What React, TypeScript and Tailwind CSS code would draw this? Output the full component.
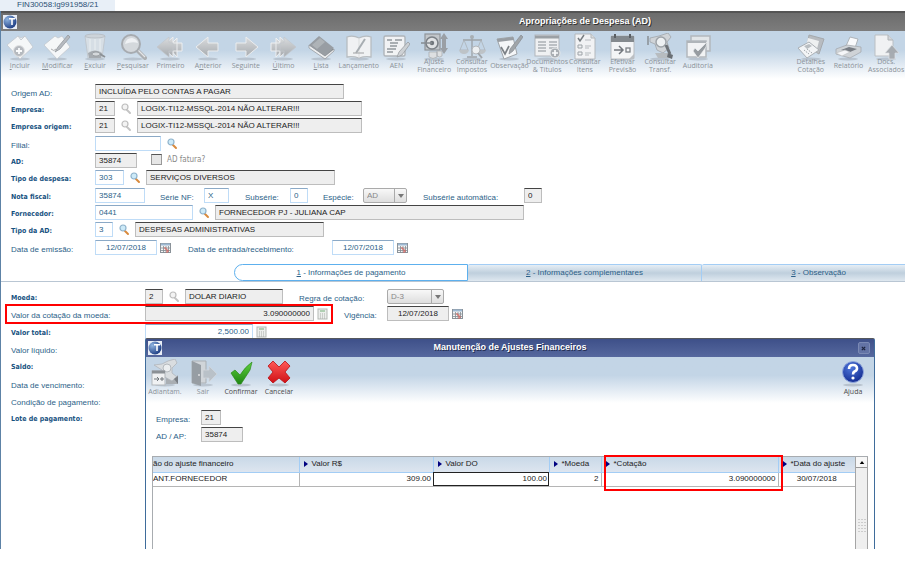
import type { ReactNode } from 'react';
import clsx from 'clsx';

/* ---------- Drawings ---------- */

const icons: Record<string, ReactNode> = {
  incluir: (
    <>
      <path d="M1 12 12 3l3 2 4-2 8 11-13 12z" fill="#fbfbfb" stroke="#c3c7cc" strokeWidth=".8" />
      <path d="m12 3 3 4 4-4" fill="none" stroke="#c6cacf" />
      <circle cx="13" cy="18" r="5.5" fill="#b4b7bb" stroke="#e4e4e4" />
      <path d="M13 15v6M10 18h6" stroke="#fff" strokeWidth="1.8" />
    </>
  ),
  modificar: (
    <>
      <path d="M1 12 12 3l3 2 4-2 8 11-13 12z" fill="#fbfbfb" stroke="#c3c7cc" strokeWidth=".8" />
      <path d="m25 2-10 12-3 5 5-3L27 4z" fill="#b5b8bc" stroke="#8f9397" strokeWidth=".8" />
      <path d="M8 16q3 3 5 0" fill="none" stroke="#aaa" />
    </>
  ),
  excluir: (
    <>
      <path d="M4 3h20l-3 22H7z" fill="#dfe2e5" fillOpacity=".8" stroke="#bcc1c6" strokeWidth=".8" />
      <ellipse cx="14" cy="3" rx="10" ry="2" fill="#ced3d8" stroke="#b4b9be" strokeWidth=".8" />
      <path d="M9 6v12M14 6v12M19 6v12" stroke="#eff1f3" strokeWidth="1" />
      <path d="M7 20q7-5 14 0l-1 5H8z" fill="#a2a6aa" />
      <path d="m19 21 5 3" stroke="#85898d" strokeWidth="2" />
      <ellipse cx="15" cy="21" rx="4" ry="2" fill="#d6d8da" stroke="#85898d" strokeWidth=".7" />
    </>
  ),
  pesquisar: (
    <>
      <path d="m18 17 8 8" stroke="#a9abad" strokeWidth="4" strokeLinecap="round" />
      <path d="m19 17 7 7" stroke="#e8e8e8" strokeWidth="1.3" />
      <circle cx="12" cy="11" r="9" fill="#d6d9dc" stroke="#a4a7ab" strokeWidth="2" />
      <path d="M6 11q1-6 7-6 5 1 6 5-6-2-13 1z" fill="#f4f5f6" />
    </>
  ),
  primeiro: (
    <>
      <path d="M12 14 21 5v5h5v8h-5v6z" fill="url(#silver)" stroke="#f3f3f3" />
      <path d="M6 14 17 4v6h4v8h-4v6z" fill="url(#silver)" stroke="#f0f0f0" />
      <path d="M1 14 13 4v6h4v8h-4v6z" fill="url(#silver)" stroke="#c3c6ca" strokeWidth=".7" />
    </>
  ),
  anterior: <path d="M2 14 14 4v6h10v8H14v6z" fill="url(#silver)" stroke="#f0f0f0" />,
  seguinte: <path d="M26 14 14 4v6H4v8h10v6z" fill="url(#silver)" stroke="#f0f0f0" />,
  ultimo: (
    <>
      <path d="M16 14 7 5v5H2v8h5v6z" fill="url(#silver)" stroke="#f3f3f3" />
      <path d="M22 14 11 4v6H7v8h4v6z" fill="url(#silver)" stroke="#f0f0f0" />
      <path d="M27 14 15 4v6h-4v8h4v6z" fill="url(#silver)" stroke="#c3c6ca" strokeWidth=".7" />
    </>
  ),
  lista: (
    <>
      <path d="m2 13 10-9 15 13-9 9z" fill="#6f7377" />
      <path d="m2 15 16 11 9-8v-2l-9 7L2 12z" fill="#f1f1f1" stroke="#898d91" strokeWidth=".7" />
      <path d="m2 12 10-9 15 12-9 8z" fill="#94989c" />
      <path d="m5 12 8-7 5 4-8 7z" fill="#acb0b3" />
    </>
  ),
  lancamento: (
    <>
      <path d="M2 4q6-2 12 1 6-3 12-1v20q-6-1-12 1-6-2-12-1z" fill="#f5f5f5" stroke="#b6babd" strokeWidth="1.3" />
      <path d="M14 5v20" stroke="#ddd" />
      <path d="m20 6-9 14" stroke="#a5a9ad" strokeWidth="2" />
      <path d="M8 20h11" stroke="#aaa" strokeWidth="1.2" />
    </>
  ),
  aen: (
    <>
      <rect x="2" y="3" width="21" height="20" rx="1.5" fill="#f6f6f6" stroke="#adb1b5" strokeWidth="1.4" />
      <path d="M5 7h5M8 10h8M8 13h7M5 16h9M5 19h6M13 7h7" stroke="#8f9397" strokeWidth="1.3" />
      <path d="m26 9-9 10-2 5 5-2 8-11z" fill="#cfd1d3" stroke="#94979a" strokeWidth=".8" />
    </>
  ),
  ajuste: (
    <>
      <rect x="5" y="1" width="15" height="16" fill="#c2c5c8" stroke="#8a8e92" strokeWidth="1.2" />
      <circle cx="12" cy="10" r="6" fill="#e4e4e4" stroke="#75797d" strokeWidth="1.6" />
      <circle cx="12" cy="10" r="2.2" fill="#686c70" />
      <path d="M1 10h11" stroke="#808488" strokeWidth="1.5" />
      <path d="m24 0 4 6h-2v9h2l-4 6-4-6h2V6h-2z" fill="#969a9e" />
      <path d="M9 19v5q4 3 8 0v-5zM17 18v5q3 2 5 0v-5z" fill="#dfe0e1" stroke="#a2a5a8" strokeWidth=".7" />
    </>
  ),
  impostos: (
    <>
      <path d="M14 3v20M5 7h19M9 24h10" stroke="#9b9fa3" strokeWidth="1.4" />
      <circle cx="14" cy="4" r="2" fill="#a6aaae" />
      <path d="M6 7 2 17h8zM23 7l-4 10h8z" fill="none" stroke="#aaaeb2" strokeWidth=".8" />
      <path d="M1 17h10q-1 4-5 4t-5-4zM18 17h10q-1 4-5 4t-5-4z" fill="#bdc1c4" />
      <circle cx="18" cy="17" r="4" fill="#f1f2f3" stroke="#b1b4b7" />
      <path d="m20 20 4 5" stroke="#9b9fa3" strokeWidth="2" />
    </>
  ),
  observacao: (
    <>
      <path d="m2 6 16-2 4 17-13 5z" fill="#fafafa" stroke="#9a9ea2" />
      <path d="m2 6 16-2 1 3L3 9z" fill="#94989c" />
      <path d="m6 14 4 7 4-8" fill="none" stroke="#74787c" strokeWidth="1.7" />
      <path d="M26 2 15 16l-1 5 4-3L28 4z" fill="#9da0a3" stroke="#818589" strokeWidth=".7" />
    </>
  ),
  documentos: (
    <>
      <rect x="2" y="2" width="24" height="21" fill="#f4f4f4" stroke="#b0b3b7" />
      <path d="M2 4h24" stroke="#979b9f" strokeWidth="3" />
      <path d="M5 9h8M5 12h8M5 15h8M5 18h8M16 9h8M16 12h8M16 15h8" stroke="#a9acb0" strokeWidth="1.3" />
      <circle cx="22" cy="20" r="5" fill="#a5a9ad" stroke="#ededed" />
      <path d="M22 17v6M19 20h6" stroke="#fff" strokeWidth="1.7" />
    </>
  ),
  itens: (
    <>
      <path d="M4 1h16l4 4v21H4z" fill="#f6f6f6" stroke="#b2b5b8" />
      <path d="M20 1v4h4" fill="#ddd" stroke="#b2b5b8" />
      <path d="M7 5l2 3 4-6" fill="none" stroke="#707478" strokeWidth="1.5" />
      <path d="M7 12h4v3H7zM7 19h4v3H7z" fill="none" stroke="#999da1" />
      <path d="M14 7h6M14 13h6M14 15h4M14 20h6M14 22h4" stroke="#b5b8bb" />
    </>
  ),
  efetivar: (
    <>
      <rect x="3" y="3" width="23" height="23" rx="1" fill="#f8f8f8" stroke="#b7babd" />
      <path d="M3 3h23v6H3z" fill="#7d8185" />
      <path d="M7 1v4M22 1v4" stroke="#4f5356" strokeWidth="2" />
      <path d="M6 17h9M11 13l4 4-4 4" fill="none" stroke="#6b6f73" strokeWidth="1.5" />
      <rect x="18" y="15" width="4" height="4" fill="none" stroke="#74787c" strokeWidth="1.3" />
      <path d="m21 26 5-5v5z" fill="#b9bcbf" />
    </>
  ),
  transf: (
    <>
      <path d="M2 3v9" stroke="#83878b" strokeWidth="1.5" />
      <path d="m4 5 9-2 9-3 3 4-4 5 2 6-6 5-6-3-2-6-5-2z" fill="#d2d4d7" stroke="#9da1a5" strokeWidth=".8" />
      <circle cx="15" cy="9" r="5" fill="#f2f3f4" stroke="#9a9ea2" strokeWidth="1.5" />
      <path d="m20 12 4 9" stroke="#63676b" strokeWidth="3" />
      <path d="M9 20h13l4 5H12z" fill="#b5b9bc" />
      <path d="m22 20 5 2-1 4-5-2z" fill="#606468" />
    </>
  ),
  auditoria: (
    <>
      <rect x="7" y="3" width="19" height="15" fill="#e6e8ea" stroke="#b1b5b9" strokeWidth="1.5" />
      <rect x="3" y="8" width="19" height="16" fill="#f6f6f6" stroke="#b1b5b9" strokeWidth="1.5" />
      <path d="M3 9h19" stroke="#adb1b5" strokeWidth="2" />
      <path d="m11 15 3 3 9-9-1 5-8 11-5-7z" fill="#92969a" stroke="#f1f1f1" strokeWidth=".7" />
    </>
  ),
  detalhes: (
    <>
      <path d="m12 2 15 4-5 15-12-7z" fill="#b7babd" stroke="#a2a5a8" />
      <path d="m11 5 11 3-3 12-10-7z" fill="#f3f3f3" />
      <path d="m1 15 11-6 10 8-12 8z" fill="#f8f8f8" stroke="#a8acb0" />
      <path d="m7 13 5-2 3 2-5 3z" fill="#b9bcbf" />
      <path d="m7 17 5 4M10 16l5 4" stroke="#9fa3a7" strokeDasharray="1.5 1" />
    </>
  ),
  relatorio: (
    <>
      <path d="m12 13 4-9 8 2-3 9z" fill="#fff" stroke="#adb1b5" />
      <path d="m2 16 11-4 14 2v5l-11 6-14-4z" fill="#d0d3d6" stroke="#9da1a5" strokeWidth=".7" />
      <path d="m7 17 8-3 8 2-7 3z" fill="#70747a" />
      <path d="m2 20 9-3 5 2-8 4z" fill="#fafafa" stroke="#bbb" strokeWidth=".6" />
    </>
  ),
  docs: (
    <>
      <path d="M3 2h13l5 5v16H3z" fill="#f5f5f5" stroke="#babdc0" />
      <path d="M16 2v5h5" fill="#d5d7d9" stroke="#adb0b3" />
      <path d="m20 12 7 8h-4v6h-6v-6h-4z" fill="#a3a7ab" stroke="#e3e4e5" strokeWidth=".7" />
    </>
  ),
  adiantam: (
    <>
      <path d="m3 6 8-1 6-3 7-2 2 4-5 5v5l5 4-5 4-9-5-1-6z" fill="#dcdee0" stroke="#b0b3b6" strokeWidth=".8" />
      <circle cx="16" cy="9" r="4" fill="#f0f1f2" stroke="#b3b6b9" />
      <rect x="1" y="12" width="13" height="14" fill="#f4f4f4" stroke="#b0b3b7" />
      <path d="M1 13h13" stroke="#85898d" strokeWidth="3" />
      <path d="M3 20h5M6 18l2 2-2 2M10 19h2v2h-2z" fill="none" stroke="#686c70" />
      <path d="M15 25v-6l6 3 6-6v9z" fill="#a5a9ad" />
      <path d="m23 20 4-3v8z" fill="#70747a" />
    </>
  ),
  sair: (
    <>
      <path d="M3 2h14v22H3z" fill="#d2d5d8" stroke="#a7abaf" />
      <path d="m3 2 9 4v21l-9-3z" fill="#92979c" />
      <circle cx="10" cy="16" r="1" fill="#e0e0e0" />
      <path d="M14 11h6V7l8 8-8 8v-4h-6z" fill="#b9bfc5" stroke="#d5d9dd" strokeWidth=".7" />
    </>
  ),
  confirmar: (
    <path d="m4 14 4-3 5 5Q18 8 25 3l-2 8-9 14h-3z" fill="url(#green)" stroke="#2b8a1b" strokeWidth=".7" />
  ),
  cancelar: (
    <path
      d="m8 2 6 6 6-6 5 5-5 6 5 6-5 5-6-5-6 5-5-5 5-6-5-6z"
      fill="url(#red)"
      stroke="#b80f14"
      strokeWidth=".8"
    />
  ),
  ajuda: (
    <>
      <circle cx="14" cy="13" r="10.5" fill="url(#blue)" stroke="#8fa6dc" />
      <path d="M10 10q0-4 4-4t4 3.500q0 2-2.500 3-1.500.8-1.500 3" fill="none" stroke="#fff" strokeWidth="2.600" />
      <circle cx="14" cy="19" r="1.600" fill="#fff" />
    </>
  ),
};

function Gradients() {
  return (
    <svg className="absolute size-0" aria-hidden="true">
      <defs>
        <linearGradient id="silver" x1="0" y1="0" x2="0" y2="1">
          <stop offset="0" stopColor="#dedede" />
          <stop offset="1" stopColor="#a3a6a9" />
        </linearGradient>
        <linearGradient id="green" x1="0" y1="0" x2="0" y2="1">
          <stop offset="0" stopColor="#5fd23f" />
          <stop offset="1" stopColor="#1f8613" />
        </linearGradient>
        <linearGradient id="red" x1="0" y1="0" x2="0" y2="1">
          <stop offset="0" stopColor="#ff5a58" />
          <stop offset="1" stopColor="#cf1016" />
        </linearGradient>
        <radialGradient id="blue" cx=".4" cy=".3" r=".8">
          <stop offset="0" stopColor="#4f78dd" />
          <stop offset="1" stopColor="#0d2489" />
        </radialGradient>
        <radialGradient id="globe" cx=".3" cy=".3" r=".8">
          <stop offset="0" stopColor="#8fb4e0" />
          <stop offset="1" stopColor="#17377f" />
        </radialGradient>
      </defs>
    </svg>
  );
}

function Logo() {
  return (
    <svg viewBox="0 0 14 14" className="size-[14px] shrink-0" aria-hidden="true">
      <rect width="14" height="14" fill="#e9eef6" />
      <circle cx="7" cy="7" r="6.500" fill="url(#globe)" />
      <path d="M6 3h6v1.500H9.800V10H8.200V4.500H6z" fill="#fff" />
    </svg>
  );
}

function Lens({ off }: { off?: boolean }) {
  return (
    <button type="button" aria-label="Pesquisar" className="size-3 shrink-0">
      <svg viewBox="0 0 12 12" className="size-3">
        <path d="m7 7 3 3" stroke={off ? '#c4c4c4' : '#d98a3c'} strokeWidth="2" strokeLinecap="round" />
        <circle cx="5" cy="4" r="3" fill={off ? '#f3f3f3' : '#cdeaf8'} stroke={off ? '#bdbdbd' : '#8fb3cc'} strokeWidth="1.200" />
      </svg>
    </button>
  );
}

function Calendar() {
  return (
    <button type="button" aria-label="Calendário" className="h-3 w-[11px] shrink-0">
      <svg viewBox="0 0 11 12" className="h-3 w-[11px]">
        <rect x=".5" y="1.500" width="10" height="9" fill="#f6f6f6" stroke="#8a9299" />
        <path d="M1 2.500h9" stroke="#9db9d3" strokeWidth="2" />
        <path d="M1 6h9M1 8.500h9M3.500 4v7M6 4v7M8.500 4v7" stroke="#838b92" strokeWidth=".8" />
        <path d="M4 6h2v2h2v2H6" fill="none" stroke="#d9655e" />
      </svg>
    </button>
  );
}

function Calculator() {
  return (
    <button type="button" aria-label="Calculadora" className="h-3 w-[11px] shrink-0">
      <svg viewBox="0 0 11 12" className="h-3 w-[11px]">
        <rect x="1" y="1" width="9" height="10" fill="#eceeec" stroke="#b5b9b5" />
        <path d="M3 3h5" stroke="#9cc4a0" strokeWidth="1.500" />
        <path d="M3 6h5M3 8h5M3 10h5" stroke="#a9ada9" strokeDasharray="1 1" />
      </svg>
    </button>
  );
}

/* ---------- Toolbar ---------- */

interface Tool {
  icon: string;
  // one entry per line, with the access key between underscores
  label: string[];
  active?: boolean;
  className?: string;
}

const mainTools: Tool[] = [
  { icon: 'incluir', label: ['_I_ncluir'] },
  { icon: 'modificar', label: ['_M_odificar'] },
  { icon: 'excluir', label: ['_E_xcluir'] },
  { icon: 'pesquisar', label: ['_P_esquisar'] },
  { icon: 'primeiro', label: ['Primeiro'] },
  { icon: 'anterior', label: ['A_n_terior'] },
  { icon: 'seguinte', label: ['Se_g_uinte'] },
  { icon: 'ultimo', label: ['_Ú_ltimo'] },
  { icon: 'lista', label: ['_L_ista'] },
  { icon: 'lancamento', label: ['Lançamento'] },
  { icon: 'aen', label: ['AEN'] },
  { icon: 'ajuste', label: ['Ajuste', 'Financeiro'] },
  { icon: 'impostos', label: ['Consultar', 'Impostos'] },
  { icon: 'observacao', label: ['Observação'] },
  { icon: 'documentos', label: ['Documentos', '& Títulos'] },
  { icon: 'itens', label: ['Consultar', 'Itens'] },
  { icon: 'efetivar', label: ['Efetivar', 'Previsão'] },
  { icon: 'transf', label: ['Consultar', 'Transf.'] },
  { icon: 'auditoria', label: ['Auditoria'] },
  { icon: 'detalhes', label: ['Detalhes', 'Cotação'], className: 'col-start-22' },
  { icon: 'relatorio', label: ['Relatório'] },
  { icon: 'docs', label: ['Docs.', 'Associados'] },
];

const dialogTools: Tool[] = [
  { icon: 'adiantam', label: ['Adiantam.'] },
  { icon: 'sair', label: ['Sair'] },
  { icon: 'confirmar', label: ['Confirmar'], active: true },
  { icon: 'cancelar', label: ['Cancelar'], active: true },
];

function ToolButton({ icon, label, active, className }: Tool) {
  return (
    <button type="button" className={clsx('flex flex-col items-center', className)}>
      <svg viewBox="0 0 28 28" className={clsx('-mb-1 size-7 shrink-0', !active && 'opacity-90')} aria-hidden="true">
        <ellipse cx="14" cy="26" rx="10" ry="1.500" fill="#7c858e" fillOpacity=".35" />
        {icons[icon]}
      </svg>
      <span
        className={clsx(
          "relative flex h-[18px] flex-col justify-center whitespace-nowrap font-['Open_Sans',sans-serif] text-[7px] leading-[8px]",
          active ? 'text-[#4c4c4c]' : 'text-[#8b9299]',
        )}
      >
        {label.map((line) => (
          <span key={line}>
            {line.split('_').map((part, i) => (i % 2 ? <u key={i}>{part}</u> : part))}
          </span>
        ))}
      </span>
    </button>
  );
}

/* ---------- Form parts ---------- */

interface FieldProps {
  id: string;
  value?: string;
  width: string;
  editable?: boolean;
  align?: string;
  label?: string;
}

function Field({ id, value = '', width, editable, align, label }: FieldProps) {
  return (
    <input
      id={id}
      aria-label={label}
      defaultValue={value}
      readOnly={!editable}
      className={clsx(
        'h-[15px] shrink-0 border px-[3px] text-[8px] leading-[13px] outline-none',
        editable
          ? 'border-[#bfdcf7] border-t-[#8ba9c6] bg-white text-[#2c5f88]'
          : 'border-[#bdbdbd] border-t-[#444] bg-[#eee] text-[#222]',
        width,
        align,
      )}
    />
  );
}

function Label({ htmlFor, width, bold, children }: { htmlFor: string; width?: string; bold?: boolean; children: ReactNode }) {
  return (
    <label
      htmlFor={htmlFor}
      className={clsx(
        'shrink-0 whitespace-nowrap pt-1',
        bold
          ? "font-['DejaVu_Sans_Condensed','DejaVu_Sans',sans-serif] text-[7px] font-bold leading-[11px] text-[#17527f]"
          : 'text-[8px] leading-[11px] text-[#2c5f88]',
        width,
      )}
    >
      {children}
    </label>
  );
}

function Select({ id, value, width }: { id: string; value: string; width: string }) {
  return (
    <span className={clsx('relative flex h-[15px] shrink-0', width)}>
      <select
        id={id}
        className="w-full appearance-none rounded-xs border border-[#aaa] bg-linear-to-b from-[#f8f8f8] to-[#dedede] px-[3px] text-[8px] leading-[13px] text-[#888]"
      >
        <option>{value}</option>
      </select>
      <span className="pointer-events-none absolute inset-y-0 right-0 flex w-[13px] items-center justify-center border-l border-[#aaa]">
        <svg viewBox="0 0 6 4" className="h-1 w-[6px]">
          <path d="M0 0h6L3 4z" fill="#777" />
        </svg>
      </span>
    </span>
  );
}

function Row({ children }: { children: ReactNode }) {
  return <div className="flex h-[15px] items-center">{children}</div>;
}

function Group({ children }: { children: ReactNode }) {
  return <div className="flex flex-col gap-[2px]">{children}</div>;
}

/* ---------- Dialog ---------- */

function Marker() {
  return (
    <svg viewBox="0 0 4 6" className="h-[6px] w-1 shrink-0" aria-hidden="true">
      <path d="M0 0 4 3 0 6z" fill="#000080" />
    </svg>
  );
}

const columns = ['ão do ajuste financeiro', 'Valor R$', 'Valor DO', '*Moeda', '*Cotação', '*Data do ajuste'];

function AdjustmentsDialog() {
  return (
    <section
      role="dialog"
      aria-label="Manutenção de Ajustes Financeiros"
      className="absolute bottom-0 left-[145px] right-[30px] top-[338px] flex flex-col rounded-t-xs border-x border-t border-x-[#3f6c9b] border-t-[#55585e] bg-white"
    >
      <header className="flex h-[18px] shrink-0 items-center justify-between bg-linear-to-b from-[#3e5089] to-[#56689e] px-[2px]">
        <Logo />
        <h2 className="text-[9px] font-bold text-white text-shadow-[1px_1px_0_#222c50]">Manutenção de Ajustes Financeiros</h2>
        <button
          type="button"
          aria-label="Fechar"
          className="mr-[2px] flex size-3 items-center justify-center rounded-xs border border-[#7a89b4] bg-[#6373a5]"
        >
          <svg viewBox="0 0 6 6" className="size-[5px]">
            <path d="m1 1 4 4M5 1 1 5" stroke="#1d2440" strokeWidth="1.500" />
          </svg>
        </button>
      </header>

      <div className="flex h-[46px] shrink-0 bg-linear-to-b from-[#c3d5e6] from-40% to-white pt-[2px]">
        {dialogTools.map((tool) => (
          <ToolButton key={tool.icon} {...tool} className="w-[38px]" />
        ))}
        <ToolButton icon="ajuda" label={['Ajuda']} active className="ml-auto mr-[2px] w-[38px]" />
      </div>

      <div className="flex flex-col gap-[2px] pb-[14px] pl-[10px] pt-[7px]">
        <Row>
          <Label htmlFor="dlg-empresa" width="w-[45px]">Empresa:</Label>
          <Field id="dlg-empresa" value="21" width="w-5" />
        </Row>
        <Row>
          <Label htmlFor="dlg-ad" width="w-[45px]">AD / AP:</Label>
          <Field id="dlg-ad" value="35874" width="w-[42px]" />
        </Row>
      </div>

      <div className="ml-[6px] mr-[6px] flex min-h-0 grow border-l border-t border-[#a8acb0]">
        <div className="min-w-0 grow">
          <table className="w-full table-fixed border-collapse whitespace-nowrap text-[8px] leading-[12px] text-[#222]">
            <colgroup>
              <col className="w-[146px]" />
              <col className="w-[134px]" />
              <col className="w-[116px]" />
              <col className="w-[52px]" />
              <col className="w-[177px]" />
              <col />
            </colgroup>
            <thead>
              <tr className="h-[15px] bg-linear-to-b from-[#c9d9e8] to-[#dde5ef]">
                {columns.map((name, i) => (
                  <th
                    key={name}
                    scope="col"
                    className="overflow-hidden border-b border-r border-[#a3cdf5] p-0 text-left font-normal last:border-r-0"
                  >
                    {i === 0 ? (
                      name
                    ) : (
                      <span className="flex items-center gap-1 pl-1">
                        <Marker />
                        {name}
                      </span>
                    )}
                  </th>
                ))}
              </tr>
            </thead>
            <tbody>
              <tr className="h-[14px] border-b border-[#b5b5b5] text-right">
                <td className="overflow-hidden border-r border-[#b5b5b5] p-0 text-left">ANT.FORNECEDOR</td>
                <td className="p-0 pr-[2px]">309.00</td>
                <td className="p-0 pr-[2px] outline outline-[#222] -outline-offset-1">100.00</td>
                <td className="border-r border-[#b5b5b5] p-0 pr-[2px]">2</td>
                <td className="border-r border-[#b5b5b5] p-0 pr-[2px]">3.090000000</td>
                <td className="p-0 text-center">30/07/2018</td>
              </tr>
            </tbody>
          </table>
        </div>
        {/* Scroll bar */}
        <div className="flex w-[13px] shrink-0 flex-col items-center border-x border-[#a5a5a5] bg-[#efefef]">
          <button
            type="button"
            aria-label="Rolar para cima"
            className="flex h-[11px] w-full items-center justify-center border-b border-[#999] bg-[#f7f7f7]"
          >
            <svg viewBox="0 0 6 4" className="h-[3px] w-[6px]">
              <path d="M0 4h6L3 0z" fill="#000" />
            </svg>
          </button>
          <div className="flex grow flex-col items-center justify-end pb-4">
            <svg viewBox="0 0 8 14" className="h-[14px] w-2" aria-hidden="true">
              <path d="M1 0v14M4 0v14M7 0v14" stroke="#aaa" strokeDasharray="1 2" />
            </svg>
          </div>
        </div>
      </div>
    </section>
  );
}

/* ---------- Page ---------- */

export default function App() {
  return (
    <div className="h-screen overflow-hidden bg-white pb-3 pr-1 font-['Liberation_Sans',Arial,sans-serif] text-[8px]">
      <Gradients />
      <div className="relative flex h-full flex-col overflow-hidden">
        <div className="flex h-[11px] shrink-0 items-start">
          <a href="#" className="h-[11px] w-[115px] bg-[#e8eff7] pl-[17px] leading-[9px] text-[#2c4f75]">
            FIN30058:lg991958/21
          </a>
        </div>

        <main className="flex min-h-0 grow flex-col border-l border-[#5d82a6]">
          <header className="flex h-5 shrink-0 items-center border-t-2 border-[#555] bg-linear-to-b from-[#6d6d6d] to-[#7c7c7c] px-[2px]">
            <Logo />
            <h1 className="grow pl-[250px] text-center text-[9px] font-bold text-white text-shadow-[1px_1px_0_#333]">
              Apropriações de Despesa (AD)
            </h1>
          </header>

          <nav
            aria-label="Ações"
            className="grid h-[48px] shrink-0 grid-cols-24 justify-items-center bg-linear-to-b from-[#c3d5e6] from-40% to-white pt-[2px]"
          >
            {mainTools.map((tool) => (
              <ToolButton key={tool.icon} {...tool} />
            ))}
          </nav>

          <form className="flex flex-col gap-[3px] pl-[10px] pt-[5px]">
            <Group>
              <Row>
                <Label htmlFor="origem" width="w-[84px]">Origem AD:</Label>
                <Field id="origem" value="INCLUÍDA PELO CONTAS A PAGAR" width="w-[249px]" />
              </Row>
              <Row>
                <Label htmlFor="empresa" width="w-[84px]" bold>Empresa:</Label>
                <Field id="empresa" value="21" width="w-5" />
                <span className="flex px-[5px]"><Lens off /></span>
                <Field id="empresa-nome" label="Nome da empresa" value="LOGIX-TI12-MSSQL-2014 NÃO ALTERAR!!!" width="w-[225px]" />
              </Row>
              <Row>
                <Label htmlFor="empresa-origem" width="w-[84px]" bold>Empresa origem:</Label>
                <Field id="empresa-origem" value="21" width="w-5" />
                <span className="flex px-[5px]"><Lens off /></span>
                <Field id="origem-nome" label="Nome da empresa origem" value="LOGIX-TI12-MSSQL-2014 NÃO ALTERAR!!!" width="w-[225px]" />
              </Row>
            </Group>
            <Group>
              <Row>
                <Label htmlFor="filial" width="w-[84px]">Filial:</Label>
                <Field id="filial" width="w-[66px]" editable />
                <span className="flex px-[5px]"><Lens /></span>
              </Row>
              <Row>
                <Label htmlFor="ad" width="w-[84px]" bold>AD:</Label>
                <Field id="ad" value="35874" width="w-[42px]" />
                <label className="mb-[2px] ml-[14px] flex items-center gap-[5px] font-['DejaVu_Sans_Condensed',sans-serif] text-[#8a8a8a]">
                  <input type="checkbox" className="size-[11px] appearance-none border border-[#999] border-t-[#555] bg-[#e6e6e6]" />
                  AD fatura?
                </label>
              </Row>
              <Row>
                <Label htmlFor="tipo-despesa" width="w-[84px]" bold>Tipo de despesa:</Label>
                <Field id="tipo-despesa" value="303" width="w-[29px]" editable />
                <span className="flex px-[5px]"><Lens /></span>
                <Field id="despesa-nome" label="Descrição da despesa" value="SERVIÇOS DIVERSOS" width="w-[189px]" />
              </Row>
            </Group>
            <Group>
              <Row>
                <Label htmlFor="nota" width="w-[84px]" bold>Nota fiscal:</Label>
                <Field id="nota" value="35874" width="w-[50px]" editable />
                <span className="ml-[15px] flex"><Label htmlFor="serie" width="w-11">Série NF:</Label></span>
                <Field id="serie" value="X" width="w-[25px]" editable />
                <span className="ml-4 flex"><Label htmlFor="subserie" width="w-[45px]">Subsérie:</Label></span>
                <Field id="subserie" value="0" width="w-[18px]" editable />
                <span className="ml-[15px] flex"><Label htmlFor="especie" width="w-10">Espécie:</Label></span>
                <Select id="especie" value="AD" width="w-11" />
                <span className="ml-4 flex"><Label htmlFor="subserie-auto" width="w-[101px]">Subsérie automática:</Label></span>
                <Field id="subserie-auto" value="0" width="w-[18px]" />
              </Row>
              <Row>
                <Label htmlFor="fornecedor" width="w-[84px]" bold>Fornecedor:</Label>
                <Field id="fornecedor" value="0441" width="w-[98px]" editable />
                <span className="flex px-[5px]"><Lens /></span>
                <Field id="fornecedor-nome" label="Nome do fornecedor" value="FORNECEDOR PJ - JULIANA CAP" width="w-[309px]" />
              </Row>
              <Row>
                <Label htmlFor="tipo-ad" width="w-[84px]" bold>Tipo da AD:</Label>
                <Field id="tipo-ad" value="3" width="w-[18px]" editable />
                <span className="flex px-[5px]"><Lens /></span>
                <Field id="tipo-nome" label="Descrição do tipo" value="DESPESAS ADMINISTRATIVAS" width="w-[189px]" />
              </Row>
            </Group>
            <Row>
              <Label htmlFor="emissao" width="w-[84px]">Data de emissão:</Label>
              <Field id="emissao" value="12/07/2018" width="w-[62px]" editable align="text-center" />
              <span className="flex px-[3px]"><Calendar /></span>
              <span className="ml-[14px] flex"><Label htmlFor="entrada" width="w-[144px]">Data de entrada/recebimento:</Label></span>
              <Field id="entrada" value="12/07/2018" width="w-[62px]" editable align="text-center" />
              <span className="flex px-[3px]"><Calendar /></span>
            </Row>
          </form>

          {/* Tabs */}
          <div role="tablist" className="mt-[9px] flex h-[18px] shrink-0 overflow-hidden border-b border-[#b9c6d3] pl-[233px]">
            <button type="button" role="tab" aria-selected="true" className="w-[234px] shrink-0 rounded-l-full rounded-tr-xs border border-[#5db0ee] bg-white text-[#2c5f88]">
              <u>1</u> - Informações de pagamento
            </button>
            <button type="button" role="tab" aria-selected="false" className="w-[234px] shrink-0 rounded-t-xs border border-l-0 border-b-0 border-[#a3cdf5] bg-linear-to-b from-[#e6eef5] via-[#bfcfdd] to-[#dfe8f0] text-[#2c5f88]">
              <u>2</u> - Informações complementares
            </button>
            <button type="button" role="tab" aria-selected="false" className="w-[234px] shrink-0 rounded-t-xs border border-l-0 border-b-0 border-[#a3cdf5] bg-linear-to-b from-[#e6eef5] via-[#bfcfdd] to-[#dfe8f0] text-[#2c5f88]">
              <u>3</u> - Observação
            </button>
          </div>

          <form className="flex flex-col gap-[3px] pl-[10px] pt-[7px]">
            <Group>
              <Row>
                <Label htmlFor="moeda" width="w-[134px]" bold>Moeda:</Label>
                <Field id="moeda" value="2" width="w-[18px]" />
                <span className="flex px-[5px]"><Lens off /></span>
                <Field id="moeda-nome" label="Nome da moeda" value="DOLAR DIARIO" width="w-[98px]" />
                <span className="ml-4 flex"><Label htmlFor="regra" width="w-[88px]">Regra de cotação:</Label></span>
                <Select id="regra" value="D-3" width="w-[57px]" />
              </Row>
              <Row>
                <Label htmlFor="cotacao" width="w-[134px]">Valor da cotação da moeda:</Label>
                <Field id="cotacao" value="3.090000000" width="w-[169px]" align="text-right" />
                <span className="flex px-[3px]"><Calculator /></span>
                <span className="ml-[13px] flex"><Label htmlFor="vigencia" width="w-[43px]">Vigência:</Label></span>
                <Field id="vigencia" value="12/07/2018" width="w-[62px]" align="text-center" />
                <span className="flex px-[3px]"><Calendar /></span>
              </Row>
            </Group>
            <Group>
              <Row>
                <Label htmlFor="total" width="w-[134px]" bold>Valor total:</Label>
                <Field id="total" value="2,500.00" width="w-[108px]" editable align="text-right" />
                <span className="flex px-[3px]"><Calculator /></span>
              </Row>
              <Row>
                <Label htmlFor="liquido" width="w-[134px]">Valor líquido:</Label>
              </Row>
              <Row>
                <Label htmlFor="saldo" width="w-[134px]" bold>Saldo:</Label>
              </Row>
            </Group>
            <Group>
              <Row>
                <Label htmlFor="vencimento" width="w-[134px]">Data de vencimento:</Label>
              </Row>
              <Row>
                <Label htmlFor="condicao" width="w-[134px]">Condição de pagamento:</Label>
              </Row>
              <Row>
                <Label htmlFor="lote" width="w-[134px]" bold>Lote de pagamento:</Label>
              </Row>
            </Group>
          </form>
        </main>

        <AdjustmentsDialog />

        {/* Highlights */}
        <div className="pointer-events-none absolute left-[5px] top-[304px] h-5 w-[328px] border-2 border-[#f00]" />
        <div className="pointer-events-none absolute right-[122px] top-[455px] h-[36px] w-[179px] border-2 border-[#f00]" />
      </div>
    </div>
  );
}
